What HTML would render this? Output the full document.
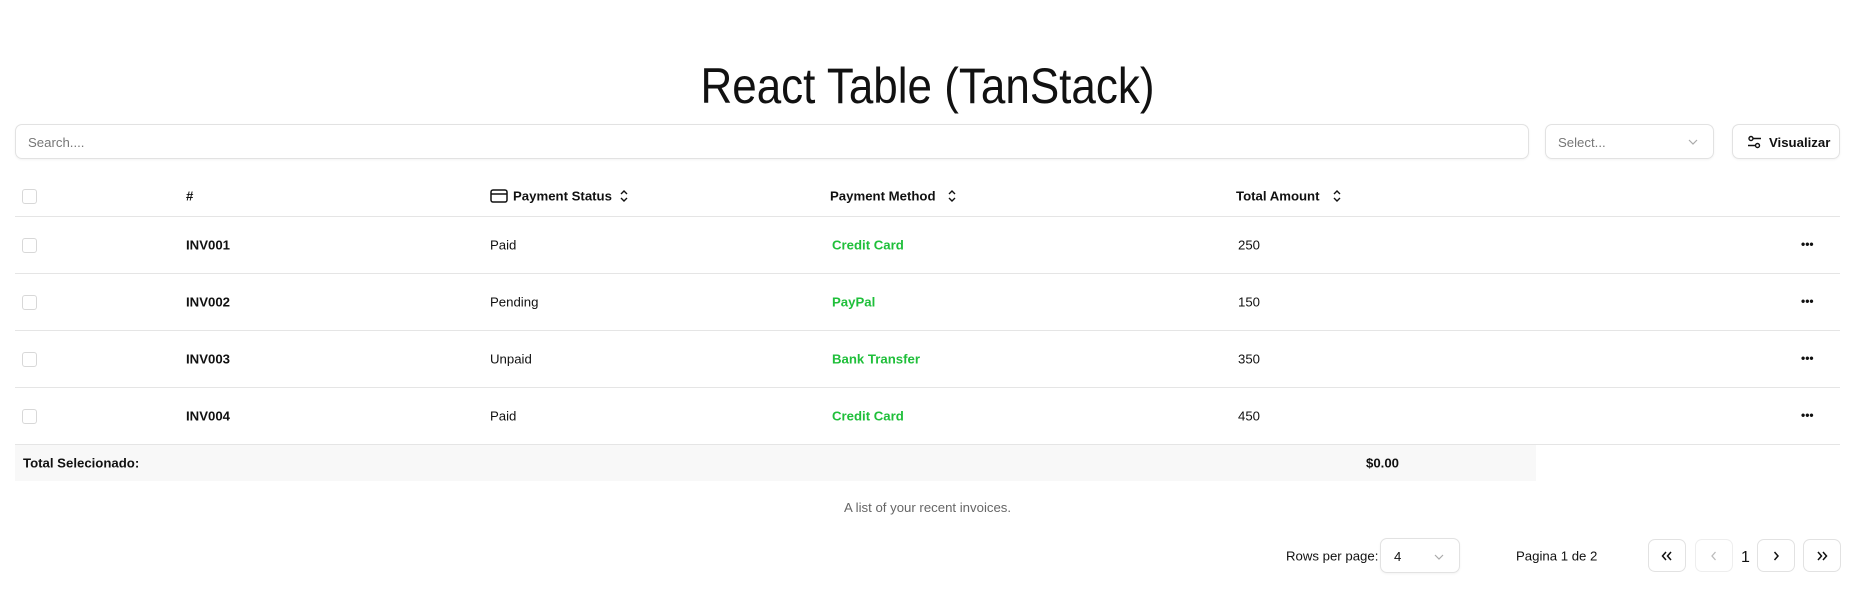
<!DOCTYPE html>
<html><head><meta charset="utf-8"><style>
*{box-sizing:border-box;margin:0;padding:0}
body{width:1855px;height:614px;background:#fff;font-family:"Liberation Sans",sans-serif;color:#111;position:relative;overflow:hidden;font-size:13.2px}
.a{position:absolute;white-space:nowrap}
.t{white-space:nowrap}
h1{position:absolute;left:0;width:1855px;top:56px;text-align:center;font-weight:400;font-size:50px;line-height:60px;transform:scaleX(0.88)}
.box{position:absolute;border:1px solid #e2e2e2;border-radius:7px;background:#fff;box-shadow:0 1px 2px rgba(0,0,0,.05)}
.ph{color:#777;font-size:13.2px}
.cb{position:absolute;left:22px;width:15px;height:15px;border:1px solid #d8d8d8;border-radius:3px}
.line{position:absolute;left:15px;width:1825px;height:1px;background:#e5e5e5}
.b{font-weight:700}
.g{color:#1fbf3a;font-weight:700}
.t{position:absolute;transform:translateY(-50%)}
.dots{position:absolute;left:1801px;font-weight:700;font-size:12px}
.pb{position:absolute;top:539px;width:38px;height:33px;border:1px solid #e2e2e2;border-radius:7px;display:flex;align-items:center;justify-content:center}
</style></head><body>
<h1>React Table (TanStack)</h1>
<div class="box" style="left:15px;top:124px;width:1514px;height:35px"><span class="ph a" style="left:12px;top:10px">Search....</span></div>
<div class="box" style="left:1545px;top:124px;width:169px;height:35px"><span class="ph a" style="left:12px;top:10px">Select...</span>
<svg class="a" style="left:141px;top:12px" width="12" height="10" viewBox="0 0 12 10"><path d="M2 3l4 4 4-4" stroke="#aaa" fill="none" stroke-width="1.2"/></svg></div>
<div class="box" style="left:1732px;top:124px;width:108px;height:35px">
<svg class="a" style="left:14px;top:10px" width="15" height="14" viewBox="0 0 15 14"><circle cx="4" cy="3.5" r="2" fill="none" stroke="#111" stroke-width="1.4"/><circle cx="10.5" cy="10.5" r="2" fill="none" stroke="#111" stroke-width="1.4"/><path d="M6 3.5h8M1 10.5h7.5" stroke="#111" stroke-width="1.4"/></svg>
<span class="a b" style="left:36px;top:10px">Visualizar</span></div>

<div class="cb" style="top:189px"></div>
<span class="t b" style="left:186px;top:196px">#</span>
<svg class="a" style="left:490px;top:189px" width="18" height="14" viewBox="0 0 18 14"><rect x="1" y="1" width="16" height="12" rx="2" fill="none" stroke="#111" stroke-width="1.5"/><path d="M1 5h16" stroke="#111" stroke-width="1.5"/></svg>
<span class="t b" style="left:513px;top:196px">Payment Status</span>
<svg class="a" style="left:619px;top:189px" width="10" height="14" viewBox="0 0 10 14"><path d="M2 5l3-3 3 3M2 9l3 3 3-3" stroke="#111" fill="none" stroke-width="1.4"/></svg>
<span class="t b" style="left:830px;top:196px">Payment Method</span>
<svg class="a" style="left:947px;top:189px" width="10" height="14" viewBox="0 0 10 14"><path d="M2 5l3-3 3 3M2 9l3 3 3-3" stroke="#111" fill="none" stroke-width="1.4"/></svg>
<span class="t b" style="left:1236px;top:196px">Total Amount</span>
<svg class="a" style="left:1332px;top:189px" width="10" height="14" viewBox="0 0 10 14"><path d="M2 5l3-3 3 3M2 9l3 3 3-3" stroke="#111" fill="none" stroke-width="1.4"/></svg>
<div class="line" style="top:216px"></div>

<div class="cb" style="top:238px"></div><span class="t b" style="left:186px;top:245px">INV001</span><span class="t" style="left:490px;top:245px">Paid</span><span class="t g" style="left:832px;top:245px">Credit Card</span><span class="t" style="left:1238px;top:245px">250</span><span class="t dots" style="top:244px">•••</span>
<div class="line" style="top:273px"></div>
<div class="cb" style="top:295px"></div><span class="t b" style="left:186px;top:302px">INV002</span><span class="t" style="left:490px;top:302px">Pending</span><span class="t g" style="left:832px;top:302px">PayPal</span><span class="t" style="left:1238px;top:302px">150</span><span class="t dots" style="top:301px">•••</span>
<div class="line" style="top:330px"></div>
<div class="cb" style="top:352px"></div><span class="t b" style="left:186px;top:359px">INV003</span><span class="t" style="left:490px;top:359px">Unpaid</span><span class="t g" style="left:832px;top:359px">Bank Transfer</span><span class="t" style="left:1238px;top:359px">350</span><span class="t dots" style="top:358px">•••</span>
<div class="line" style="top:387px"></div>
<div class="cb" style="top:409px"></div><span class="t b" style="left:186px;top:416px">INV004</span><span class="t" style="left:490px;top:416px">Paid</span><span class="t g" style="left:832px;top:416px">Credit Card</span><span class="t" style="left:1238px;top:416px">450</span><span class="t dots" style="top:415px">•••</span>
<div class="line" style="top:444px"></div>

<div class="a" style="left:15px;top:445px;width:1521px;height:36px;background:#f8f8f8"></div>
<span class="t b" style="left:23px;top:463px">Total Selecionado:</span>
<span class="t b" style="left:1366px;top:463px">$0.00</span>
<div class="a" style="left:0;width:1855px;top:500px;text-align:center;color:#666">A list of your recent invoices.</div>

<span class="t" style="left:1286px;top:556px">Rows per page:</span>
<div class="box" style="left:1380px;top:538px;width:80px;height:35px"><span class="a" style="left:13px;top:10px">4</span>
<svg class="a" style="left:52px;top:13px" width="12" height="10" viewBox="0 0 12 10"><path d="M2 3l4 4 4-4" stroke="#aaa" fill="none" stroke-width="1.2"/></svg></div>
<span class="t" style="left:1516px;top:556px">Pagina 1 de 2</span>
<div class="pb" style="left:1648px"><svg width="12" height="10" viewBox="0 0 12 10"><path d="M5 1L1.5 5 5 9M10 1L6.5 5 10 9" stroke="#111" fill="none" stroke-width="1.5"/></svg></div>
<div class="pb" style="left:1695px;border-color:#eee"><svg width="8" height="10" viewBox="0 0 8 10"><path d="M5.5 1L2 5l3.5 4" stroke="#bbb" fill="none" stroke-width="1.3"/></svg></div>
<span class="a" style="left:1741px;top:549px;font-size:16px">1</span>
<div class="pb" style="left:1757px"><svg width="8" height="10" viewBox="0 0 8 10"><path d="M2.5 1L6 5 2.5 9" stroke="#111" fill="none" stroke-width="1.5"/></svg></div>
<div class="pb" style="left:1803px"><svg width="12" height="10" viewBox="0 0 12 10"><path d="M2 1l3.5 4L2 9M7 1l3.5 4L7 9" stroke="#111" fill="none" stroke-width="1.5"/></svg></div>
</body></html>
